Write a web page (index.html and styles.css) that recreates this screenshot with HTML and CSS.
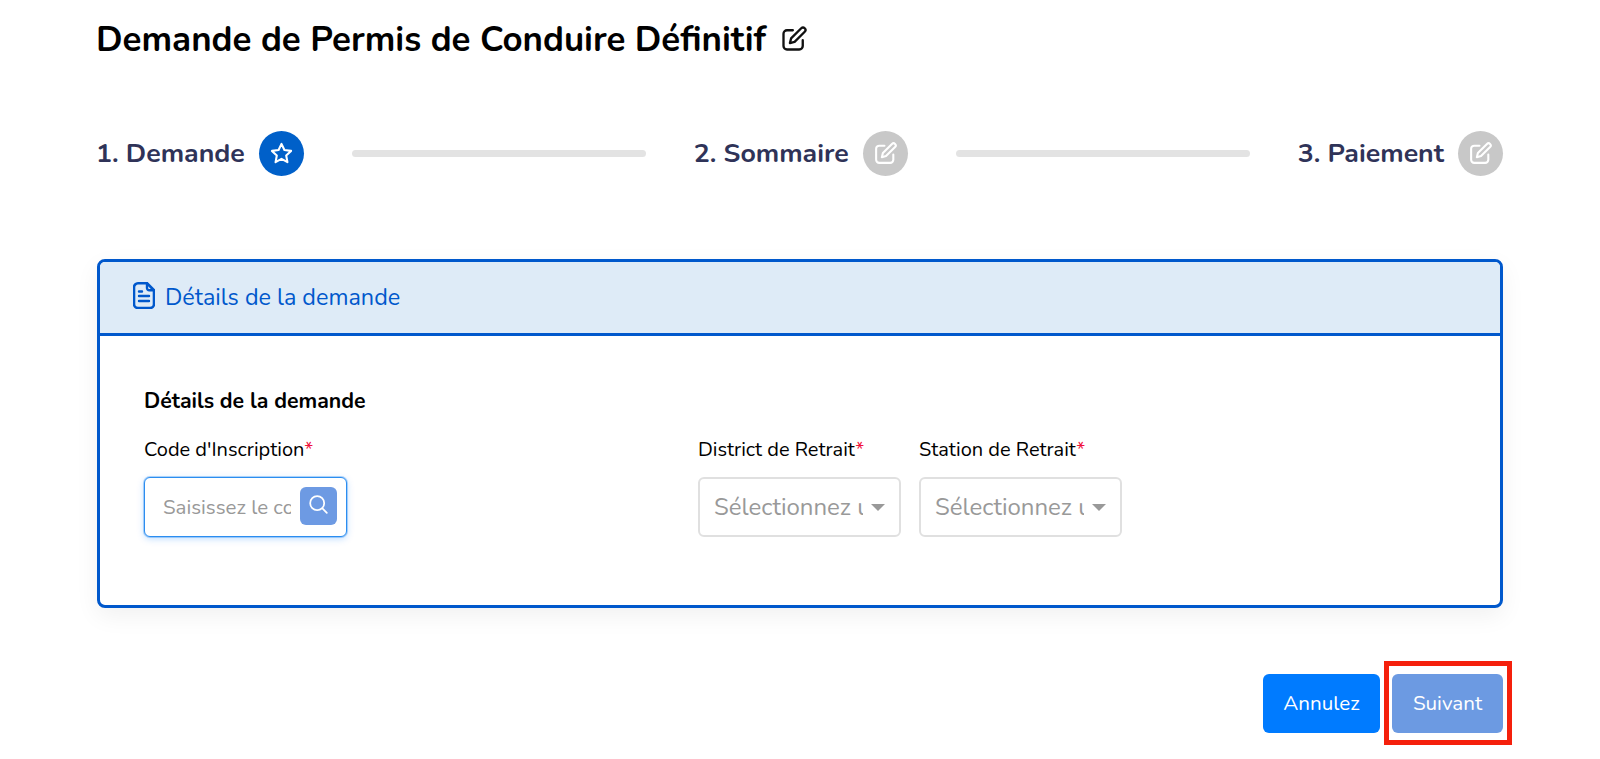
FILE: index.html
```html
<!DOCTYPE html>
<html lang="fr">
<head>
<meta charset="utf-8">
<title>Demande de Permis de Conduire Définitif</title>
<link rel="stylesheet" href="styles.css">
</head>
<body>
<svg class="defs" width="0" height="0" aria-hidden="true">
  <symbol id="edit" viewBox="0 0 24 24"><path d="M11 4.500H6a3 3 0 0 0-3 3V18a3 3 0 0 0 3 3h10.500a3 3 0 0 0 3-3v-5" fill="none" stroke="currentColor" stroke-width="2" stroke-linecap="round"/><path d="M18.200 2.800a2.100 2.100 0 0 1 3 3L12.500 14.500l-4 1 1-4z" fill="none" stroke="currentColor" stroke-width="2" stroke-linejoin="round"/></symbol>
</svg>
<main class="page">
  <h1 class="title"><span>Demande de Permis de Conduire Définitif</span><svg class="title-icon"><use href="#edit"/></svg></h1>
  <div class="steps">
    <div class="step"><span class="step-label">1. Demande</span><span class="step-dot active"><svg class="dot-icon" viewBox="0 0 24 24"><path d="M12 2.800l2.800 5.900 6.400.8-4.700 4.400 1.200 6.400-5.700-3.100-5.700 3.100 1.200-6.400-4.700-4.400 6.400-.8z" fill="none" stroke="currentColor" stroke-width="2" stroke-linejoin="round"/></svg></span></div>
    <div class="bar"></div>
    <div class="step"><span class="step-label">2. Sommaire</span><span class="step-dot"><svg class="dot-icon"><use href="#edit"/></svg></span></div>
    <div class="bar"></div>
    <div class="step"><span class="step-label">3. Paiement</span><span class="step-dot"><svg class="dot-icon"><use href="#edit"/></svg></span></div>
  </div>
  <section class="card">
    <header class="card-head">
      <svg class="doc-icon" viewBox="0 0 22 27"><path d="M14 1.300H5a4 4 0 0 0-4 4V22a4 4 0 0 0 4 4h12a4 4 0 0 0 4-4V8.200z" fill="none" stroke="currentColor" stroke-width="2.600" stroke-linejoin="round"/><path d="M14 1.300V6a2.200 2.200 0 0 0 2.200 2.200H21M6 14h10M6 19h10M6 9.500h3" fill="none" stroke="currentColor" stroke-width="2.400" stroke-linecap="round"/></svg>
      <span>Détails de la demande</span>
    </header>
    <div class="card-body">
      <h2 class="section-title">Détails de la demande</h2>
      <div class="fields">
        <div class="field field-code">
          <label class="label">Code d'Inscription<span class="req">*</span></label>
          <div class="control focus">
            <span class="placeholder">Saisissez le code</span>
            <span class="search"><svg viewBox="0 0 24 24" class="search-icon"><circle cx="10.500" cy="10.500" r="8" fill="none" stroke="currentColor" stroke-width="2"/><path d="M16.500 16.500l5 5" stroke="currentColor" stroke-width="2" stroke-linecap="round"/></svg></span>
          </div>
        </div>
        <div class="field field-select">
          <label class="label">District de Retrait<span class="req">*</span></label>
          <div class="control select"><span class="placeholder">Sélectionnez un</span><span class="caret"></span></div>
        </div>
        <div class="field field-select">
          <label class="label">Station de Retrait<span class="req">*</span></label>
          <div class="control select"><span class="placeholder">Sélectionnez un</span><span class="caret"></span></div>
        </div>
      </div>
    </div>
  </section>
  <div class="actions">
    <button class="btn btn-cancel">Annulez</button>
    <button class="btn btn-next">Suivant</button>
  </div>
</main>
</body>
</html>
```
FILE: styles.css
```css
* { box-sizing: border-box; }
html, body { margin: 0; height: 100%; background: #fff; overflow: hidden; }
body { font-family: "Nunito", "Lato", "Noto Sans", sans-serif; }
.defs { position: absolute; }
.page { padding: 15px 97px 0; }
.title { display: flex; align-items: center; margin: 0 0 0 -1px; height: 48px; font-size: 34.900px; font-weight: 700; color: #000; }
.title-icon { width: 28px; height: 28px; margin-left: 14px; color: #111; }
.steps { display: flex; align-items: center; justify-content: space-between; margin: 68px 0 0 -1px; height: 45px; }
.step { display: flex; align-items: center; gap: 14px; }
.step-label { margin-bottom: 2px; font-size: 26.700px; font-weight: 700; color: #2f3358; }
.step-dot { display: flex; align-items: center; justify-content: center; width: 45px; height: 45px; border-radius: 50%; background: #c8c8c8; color: #fff; }
.step-dot.active { background: #0060c9; }
.dot-icon { width: 25px; height: 25px; }
.bar { width: 294px; height: 7px; border-radius: 4px; background: #e3e3e3; }
.card { margin-top: 83px; height: 349px; border: 3px solid #0058cc; border-radius: 8px; box-shadow: 0 8px 24px rgba(0, 0, 0, .06); overflow: hidden; background: #fff; }
.card-head { display: flex; align-items: center; gap: 10px; height: 74px; padding: 0 0 2px 33px; background: #deebf7; border-bottom: 3px solid #0058cc; color: #0058cc; font-size: 23.400px; }
.doc-icon { width: 22px; height: 27px; margin-bottom: 2px; }
.card-body { padding: 51px 44px 0; }
.section-title { margin: 0; font-size: 21.300px; line-height: 28px; font-weight: 700; color: #000; }
.fields { display: flex; margin-top: 22px; }
.field { display: flex; flex-direction: column; }
.field-code { width: 554px; }
.field-select { width: 221px; }
.label { font-size: 20px; line-height: 26px; color: #000; }
.req { color: #f0103c; }
.control { display: flex; align-items: center; width: 203px; height: 60px; margin-top: 14px; border: 2px solid #e0e0e0; border-radius: 6px; background: #fff; }
.control.focus { border: 1px solid #2b8df0; box-shadow: 0 0 0 1px rgba(43, 141, 240, .35), 0 2px 7px rgba(0, 123, 255, .25); padding: 0 9px 0 18px; justify-content: space-between; }
.control.select { padding: 0 14px 0 14px; justify-content: space-between; }
.placeholder { display: block; overflow: hidden; white-space: nowrap; color: #999; }
.focus .placeholder { width: 128px; font-size: 20.500px; }
.select .placeholder { width: 149px; font-size: 24px; }
.search { display: flex; align-items: center; justify-content: center; width: 37px; height: 38px; margin-bottom: 3px; border-radius: 6px; background: #6d9ae3; color: #fff; }
.search-icon { width: 21px; height: 21px; margin-bottom: 2px; }
.caret { width: 0; height: 0; border: 7px solid transparent; border-top: 7px solid #999; border-bottom: 0; }
.actions { display: flex; justify-content: flex-end; gap: 12px; margin-top: 66px; }
.btn { height: 59px; padding: 0 0 2px; border: 0; border-radius: 6px; color: #fff; font: inherit; font-size: 20.600px; }
.btn-cancel { width: 117px; background: #007bff; }
.btn-next { position: relative; width: 111px; background: #6c9ae2; }
.btn-next::after { content: ""; position: absolute; inset: -13px -9px -12px -8px; border: 5px solid #f5200c; }
```
